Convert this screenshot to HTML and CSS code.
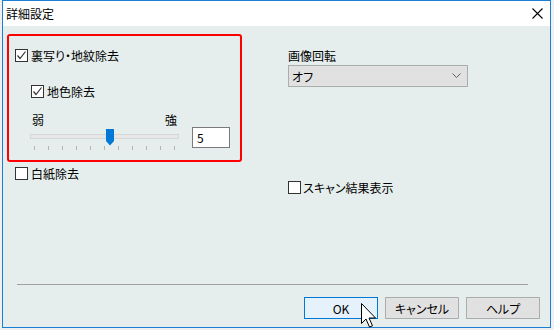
FILE: index.html
```html
<!DOCTYPE html>
<html lang="ja">
<head>
    <meta charset="UTF-8">
    <meta name="viewport" content="width=device-width, initial-scale=1.0">
    <title>詳細設定</title>
    <link rel="stylesheet" href="styles.css">
</head>
<body>
    <div class="window">
        <div class="titlebar">
            <span class="title">詳細設定</span>
            <svg class="close" width="11" height="11" viewBox="0 0 11 11">
                <path d="M0.5 0.5 L10.5 10.5 M10.5 0.5 L0.5 10.5" stroke="#000" stroke-width="1.1" fill="none"/>
            </svg>
        </div>

        <div class="content">
            <div class="panels">
                <!-- 左側 -->
                <div class="col-left">
                    <div class="group">
                        <label class="check-row">
                            <span class="box checked">
                                <svg width="11" height="11" viewBox="0 0 11 11"><path d="M1.5 5.5 L4 8.5 L9.5 1.5" stroke="#333" stroke-width="1.2" fill="none"/></svg>
                            </span>
                            <span>裏写り・地紋除去</span>
                        </label>

                        <label class="check-row sub">
                            <span class="box checked">
                                <svg width="11" height="11" viewBox="0 0 11 11"><path d="M1.5 5.5 L4 8.5 L9.5 1.5" stroke="#333" stroke-width="1.2" fill="none"/></svg>
                            </span>
                            <span>地色除去</span>
                        </label>

                        <div class="slider-block">
                            <div class="slider-col">
                                <div class="slider-labels">
                                    <span>弱</span>
                                    <span>強</span>
                                </div>
                                <div class="slider">
                                    <div class="track"></div>
                                    <svg class="thumb" width="8" height="17" viewBox="0 0 8 17">
                                        <path d="M0 0 H8 V12 L4 16.5 L0 12 Z" fill="#0078d7"/>
                                    </svg>
                                    <div class="ticks">
                                        <i></i><i></i><i></i><i></i><i></i><i></i><i></i><i></i><i></i><i></i><i></i>
                                    </div>
                                </div>
                            </div>
                            <div class="num-box">5</div>
                        </div>
                    </div>

                    <label class="check-row blank">
                        <span class="box"></span>
                        <span>白紙除去</span>
                    </label>
                </div>

                <!-- 右側 -->
                <div class="col-right">
                    <div class="field-label">画像回転</div>
                    <div class="select">
                        <span>オフ</span>
                        <svg width="9" height="6" viewBox="0 0 9 6"><path d="M0.5 0.5 L4.5 4.5 L8.5 0.5" stroke="#606060" stroke-width="1" fill="none"/></svg>
                    </div>
                    <label class="check-row result">
                        <span class="box"></span>
                        <span>スキャン結果表示</span>
                    </label>
                </div>
            </div>

            <div class="footer">
                <div class="separator"></div>
                <div class="buttons">
                    <button class="btn default">OK</button>
                    <button class="btn">キャンセル</button>
                    <button class="btn">ヘルプ</button>
                </div>
            </div>

            <!-- マウスカーソル -->
            <svg class="cursor" width="17" height="26" viewBox="0 0 17 26">
                <path d="M0.5 0.5 L0.5 20.5 L5 16 L8.5 24 L11.5 22.8 L8 15 L14.5 15 Z" fill="#fff" stroke="#000" stroke-width="1" stroke-linejoin="miter"/>
            </svg>
        </div>
    </div>
</body>
</html>
```

FILE: styles.css
```css
/* 全体 */
body {
    margin: 0;
    background-color: #f0f0f0;
    font-family: "Noto Sans CJK JP", "Noto Sans", sans-serif;
    font-size: 12px;
    font-feature-settings: "palt";
    color: #000000;
}

/* ダイアログ枠 */
.window {
    box-sizing: border-box;
    width: 549px;
    height: 328px;
    margin-left: 2px;
    border: 1px solid #1a7fd4;
    background-color: #e6eeed;
}

/* タイトルバー */
.titlebar {
    height: 25px;
    background: #ffffff;
    display: flex;
    align-items: center;
    justify-content: space-between;
    padding: 0 7px 0 3px;
}

.title {
    line-height: 14px;
}

/* 本体 */
.content {
    position: relative;
    height: 301px;
    box-sizing: border-box;
    padding: 8px 0 0 4px;
    display: flex;
    flex-direction: column;
}

.panels {
    display: flex;
}

.col-left {
    width: 235px;
}

.col-right {
    margin-left: 46px;
}

/* 赤枠グループ */
.group {
    box-sizing: border-box;
    width: 235px;
    height: 128px;
    border: 2px solid #ff0000;
    border-radius: 3px;
    padding: 13px 0 0 6px;
}

/* チェックボックス */
.check-row {
    display: flex;
    align-items: center;
    gap: 3px;
    height: 13px;
    line-height: 13px;
    white-space: nowrap;
}

.box {
    box-sizing: border-box;
    width: 13px;
    height: 13px;
    border: 1px solid #333333;
    background: #ffffff;
    display: flex;
    align-items: center;
    justify-content: center;
}

.check-row.sub {
    margin: 23px 0 0 16px;
}

.check-row.blank {
    margin: 5px 0 0 8px;
}

/* スライダー */
.slider-block {
    display: flex;
    margin: 15px 0 0 15px;
}

.slider-col {
    width: 149px;
}

.slider-labels {
    display: flex;
    justify-content: space-between;
    height: 14px;
    line-height: 14px;
    padding: 0 2px;
}

.slider {
    position: relative;
    height: 22px;
}

.track {
    position: absolute;
    left: 0;
    right: 0;
    top: 7px;
    height: 5px;
    box-sizing: border-box;
    background: #e7e7e7;
    border: 1px solid #d6d6d6;
}

.thumb {
    position: absolute;
    left: 76px;
    top: 2px;
}

.ticks {
    position: absolute;
    left: 4px;
    right: 4px;
    top: 19px;
    display: flex;
    justify-content: space-between;
}

.ticks i {
    width: 1px;
    height: 4px;
    background: #b4b4b4;
}

.num-box {
    box-sizing: border-box;
    width: 38px;
    height: 21px;
    margin: 14px 0 0 13px;
    border: 1px solid #7a7a7a;
    background: #ffffff;
    padding-left: 4px;
    line-height: 19px;
}

/* 右側 */
.field-label {
    margin-top: 15px;
    height: 14px;
    line-height: 14px;
}

.select {
    box-sizing: border-box;
    width: 180px;
    height: 22px;
    margin-top: 2px;
    border: 1px solid #adadad;
    background: #e1e1e1;
    display: flex;
    align-items: center;
    justify-content: space-between;
    padding: 0 6px 0 3px;
}

.check-row.result {
    margin-top: 94px;
    gap: 2px;
}

/* フッター */
.footer {
    margin-top: auto;
    padding-bottom: 8px;
}

.separator {
    width: 511px;
    height: 1px;
    margin-left: 10px;
    background: #a0a0a0;
}

.buttons {
    display: flex;
    justify-content: flex-end;
    gap: 7px;
    margin-top: 12px;
    padding-right: 10px;
}

.btn {
    box-sizing: border-box;
    width: 74px;
    height: 22px;
    border: 1px solid #adadad;
    background: #e1e1e1;
    font-family: inherit;
    font-size: 12px;
    font-feature-settings: "palt";
    color: #000000;
    padding: 0;
}

.btn.default {
    border-color: #0078d7;
    background: #e5f1fb;
}

.cursor {
    position: absolute;
    left: 358px;
    top: 277px;
}
```
